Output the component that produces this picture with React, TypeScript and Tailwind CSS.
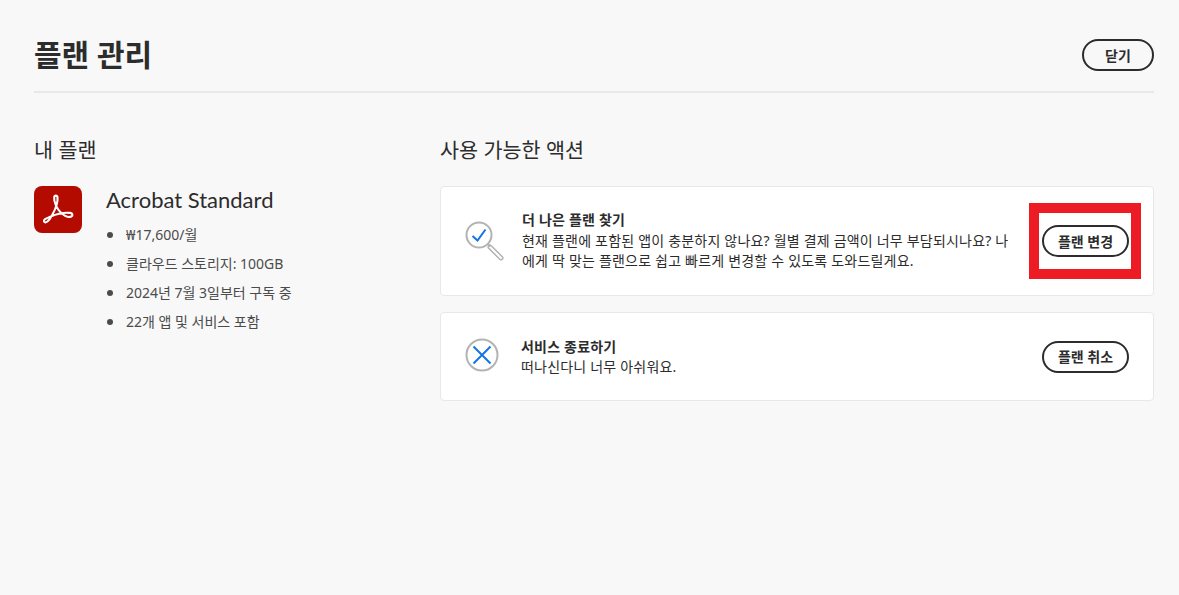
import React from 'react';

function PdfLogo() {
  return (
    <div className="w-12 h-[47px] rounded-lg bg-[#b30b00] flex items-center justify-center">
      <svg viewBox="0 0 48 47" className="w-12 h-[47px]" fill="none" stroke="#fff" strokeWidth="2.100" strokeLinejoin="round">
        <path d="M10 35.500c1.500 2.500 5-.5 8-6 3-5.500 6-14 5.500-18-.3-2.500-3-2.500-3.300 0-.5 4.500 3 12 7 15.500 4 3.500 8 4.500 10 3.500 2-1 1.500-3.300-1-3.600-5-.6-13.500 1-19.500 3.600-4 1.800-7.500 3-6.700 5z" />
      </svg>
    </div>
  );
}

function SearchCheck() {
  return (
    <svg viewBox="0 0 40 41" className="w-[40px] h-[41px]" fill="none">
      <circle cx="14" cy="14" r="12.500" stroke="#b3b3b3" strokeWidth="2" />
      <path d="M23 23l2.500 2.500" stroke="#b3b3b3" strokeWidth="2" />
      <path d="M26 24.500l11.500 11.500a1.800 1.800 0 0 1-2.500 2.500L23.500 27a1.800 1.800 0 0 1 2.500-2.500z" stroke="#b3b3b3" strokeWidth="1.500" />
      <path d="M7.500 15l5 4.500L20.500 8.500" stroke="#1473e6" strokeWidth="2" />
    </svg>
  );
}

function XCircle() {
  return (
    <svg viewBox="0 0 34 34" className="w-[34px] h-[34px] -mt-[3px]" fill="none">
      <circle cx="17" cy="17" r="15.500" stroke="#b3b3b3" strokeWidth="2" />
      <path d="M8.500 8.500l17 17M25.500 8.500l-17 17" stroke="#1473e6" strokeWidth="2" />
    </svg>
  );
}

function PillButton({ label }: { label: string }) {
  return (
    <button className="h-[32px] w-[87px] rounded-full border-2 border-[#2c2c2c] text-[14px] font-bold text-[#2c2c2c] flex items-center justify-center whitespace-nowrap">
      {label}
    </button>
  );
}

export default function App() {
  const items = ['₩17,600/월', '클라우드 스토리지: 100GB', '2024년 7월 3일부터 구독 중', '22개 앱 및 서비스 포함'];

  return (
    <div className="w-[1179px] h-[595px] overflow-hidden bg-[#f8f8f8] text-[#2c2c2c] pl-[34px] pr-[25px] font-['Noto_Sans','Noto_Sans_CJK_KR',sans-serif]">
      <header className="h-[93px] border-b-2 border-[#e8e8e8] flex items-center justify-between pt-[19px]">
        <h1 className="text-[30px] font-bold leading-none">플랜 관리</h1>
        <button className="h-[32px] w-[72px] rounded-full border-2 border-[#2c2c2c] text-[14px] font-bold flex items-center justify-center">닫기</button>
      </header>

      <div className="flex pt-[44px]">
        <aside className="w-[406px] shrink-0">
          <h2 className="text-[20.700px] leading-[26px]">내 플랜</h2>
          <div className="flex mt-[23px]">
            <PdfLogo />
            <div className="ml-6">
              <div className="text-[22px] leading-[28px] font-['Lato','Noto_Sans_CJK_KR',sans-serif]">Acrobat Standard</div>
              <ul className="mt-[6px] text-[14px] text-[#4b4b4b]">
                {items.map((t) => (
                  <li key={t} className="h-[29px] flex items-center">
                    <span className="w-[6px] h-[6px] rounded-full bg-[#4b4b4b] mr-[13px] ml-px" />
                    {t}
                  </li>
                ))}
              </ul>
            </div>
          </div>
        </aside>

        <main className="flex-1">
          <h2 className="text-[20.700px] leading-[26px]">사용 가능한 액션</h2>
          <section className="mt-[23px] h-[110px] bg-white border border-[#e8e8e8] rounded flex items-center pl-6 pr-6">
            <SearchCheck />
            <div className="ml-[17px] w-[494px] text-[14px] tracking-[0.200px] leading-[20.500px] text-[#2c2c2c]">
              <div className="font-bold">더 나은 플랜 찾기</div>
              <div>현재 플랜에 포함된 앱이 충분하지 않나요? 월별 결제 금액이 너무 부담되시나요? 나에게 딱 맞는 플랜으로 쉽고 빠르게 변경할 수 있도록 도와드릴게요.</div>
            </div>
            <div className="ml-auto relative">
              <PillButton label="플랜 변경" />
              <div className="absolute left-[-13px] top-[-22px] w-[112px] h-[76px] border-[10px] border-[#ed1c24]" />
            </div>
          </section>
          <section className="mt-[16px] h-[89px] bg-white border border-[#e8e8e8] rounded flex items-center pl-6 pr-6">
            <XCircle />
            <div className="ml-[22px] text-[14px] tracking-[0.200px] leading-[20px]">
              <div className="font-bold">서비스 종료하기</div>
              <div>떠나신다니 너무 아쉬워요.</div>
            </div>
            <div className="ml-auto">
              <PillButton label="플랜 취소" />
            </div>
          </section>
        </main>
      </div>
    </div>
  );
}
